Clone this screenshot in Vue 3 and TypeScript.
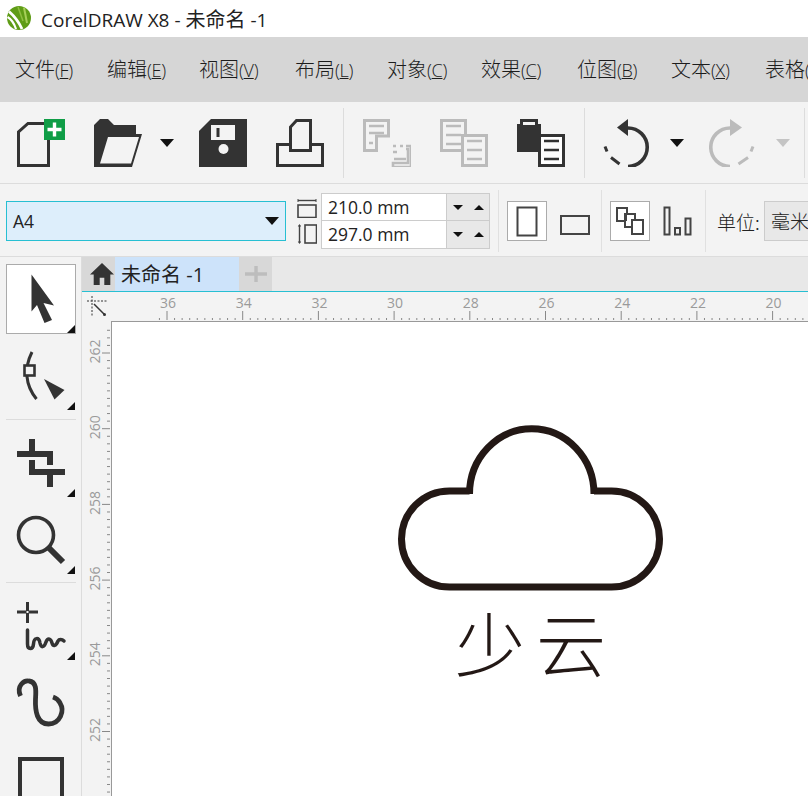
<script setup lang="ts">
const menus = [
  ['文件', 'F'], ['编辑', 'E'], ['视图', 'V'], ['布局', 'L'], ['对象', 'C'],
  ['效果', 'C'], ['位图', 'B'], ['文本', 'X'], ['表格', 'T'],
]
const step = 75.7
const hMajor = [36, 34, 32, 30, 28, 26, 24, 22, 20].map((n, i) => ({ n, x: 167 + i * step }))
const hMinor: number[] = []
for (let i = -1; i < 90; i++) if ((i + 10) % 10 !== 0) hMinor.push(167 + (i * step) / 10)
const vMajor = [262, 260, 258, 256, 254, 252].map((n, i) => ({ n, y: 353 + i * step }))
const vMinor: number[] = []
for (let i = -3; i < 62; i++) if ((i + 10) % 10 !== 0) vMinor.push(353 + (i * step) / 10)
</script>

<template>
  <div class="app">
    <header class="title">
      <svg class="logo" viewBox="6 6 26 24" width="26" height="24">
        <circle cx="19" cy="18" r="12" fill="#5f9c16" />
        <path d="M24 7.500L27 23" stroke="#a7cf5a" stroke-width="2" fill="none" />
        <path d="M18 7L23 21" stroke="#8fbf42" stroke-width="1.500" fill="none" />
        <path d="M9 11.500C13 15 18 20 22 29" stroke="#fff" stroke-width="2.800" fill="none" />
        <path d="M7.500 17C11 19 14 23 16 29" stroke="#fff" stroke-width="2.200" fill="none" />
      </svg>
      <span>CorelDRAW X8 - <span class="cjk">未命名</span> -1</span>
    </header>

    <nav class="menu">
      <span v-for="(m, i) in menus" :key="i" class="menu-item">{{ m[0] }}<small>(<u>{{ m[1] }}</u>)</small></span>
    </nav>

    <section class="toolbar">
      <svg class="ti t-new" viewBox="17 119 48 48" width="48" height="48">
        <path d="M28 123.500H48.500V165.500H18.500V132Z" fill="none" stroke="#333" stroke-width="3" />
        <rect x="44" y="119" width="21" height="21" fill="#0f9d46" />
        <path d="M54.500 122.500V136.500M47.500 129.500H61.500" stroke="#fff" stroke-width="3.400" />
      </svg>
      <svg class="ti t-open" viewBox="94 119 48 48" width="48" height="48">
        <path d="M94 125L100 119H108L114 125H136V134H142L132 167H94Z M108 137L100 163.500H131L139 137Z" fill="#333" fill-rule="evenodd" />
      </svg>
      <i class="caret t-c1"></i>
      <svg class="ti t-save" viewBox="199 119 48 48" width="48" height="48">
        <path d="M211 119H247V167H199V131Z" fill="#333" />
        <rect x="211" y="125" width="24" height="15" fill="#f3f3f3" />
        <rect x="216.500" y="128" width="3" height="9" fill="#333" />
        <circle cx="223.500" cy="149" r="5" fill="#f3f3f3" />
      </svg>
      <svg class="ti t-print" viewBox="276 119 48 48" width="48" height="48">
        <path d="M290.500 150.500V127L296.500 120.500H310.500V150.500Z" fill="none" stroke="#333" stroke-width="3" />
        <path d="M290.500 144.500H277.500V165.500H322.500V144.500H310.500" fill="none" stroke="#333" stroke-width="3" />
      </svg>
      <i class="sep t-s1"></i>
      <svg class="ti t-imp" viewBox="363 119 48 48" width="48" height="48">
        <path d="M364.500 120.500H388.500V136H376.500V150.500H364.500Z" fill="none" stroke="#bbb" stroke-width="3" />
        <path d="M369 126H384M369 133H384M369 143H373" stroke="#bbb" stroke-width="2.600" />
        <path d="M393 146H396M400 146H403M406 146H411V167H393V163H408V149H406M393 152H397M394 159H406" fill="none" stroke="#bbb" stroke-width="2.600" />
      </svg>
      <svg class="ti t-exp" viewBox="440 119 48 48" width="48" height="48">
        <rect x="441.500" y="120.500" width="24" height="30" fill="none" stroke="#bbb" stroke-width="3" />
        <path d="M446 126H461M446 135H461M446 144H461" stroke="#bbb" stroke-width="2.600" />
        <rect x="462.500" y="135.500" width="24" height="30" fill="#f3f3f3" stroke="#bbb" stroke-width="3" />
        <path d="M467 141H482M467 150H482M467 159H482" stroke="#bbb" stroke-width="2.600" />
      </svg>
      <svg class="ti t-paste" viewBox="517 119 48 48" width="48" height="48">
        <path d="M517 124H520V119H538V124H541V152H517Z" fill="#333" />
        <rect x="523" y="122" width="12" height="3" fill="#f3f3f3" />
        <rect x="539.500" y="135.500" width="24" height="30" fill="#fff" stroke="#333" stroke-width="3" />
        <path d="M544 141H559M544 150H559M544 159H559" stroke="#333" stroke-width="2.600" />
      </svg>
      <i class="sep t-s2"></i>
      <svg class="ti t-undo" viewBox="603 119 48 48" width="48" height="48">
        <path d="M617 127.500L628 119V136Z" fill="#333" />
        <path d="M628 128A19.250 19.250 0 0 1 628 166.500" fill="none" stroke="#333" stroke-width="3.600" />
        <path d="M611 157.500L619.500 164M605 146.500L607 151.500" fill="none" stroke="#333" stroke-width="3" />
      </svg>
      <i class="caret t-c2"></i>
      <svg class="ti t-redo" viewBox="709 119 48 48" width="48" height="48">
        <path d="M742 127.500L730 119V136Z" fill="#bbb" />
        <path d="M730 128A19.250 19.250 0 0 0 730 166.500" fill="none" stroke="#bbb" stroke-width="3.600" />
        <path d="M748 157.500L738.500 164M753 146.500L751 151.500" fill="none" stroke="#bbb" stroke-width="3" />
      </svg>
      <i class="caret off t-c3"></i>
      <i class="sep t-s3"></i>
    </section>

    <section class="propbar">
      <div class="select"><span>A4</span><i class="caret"></i></div>
      <div class="dim-icons">
        <svg viewBox="297 199 20 19" width="20" height="19">
          <path d="M298 200.500H316" stroke="#444" stroke-width="1.400" />
          <path d="M298 199V202M316 199V202" stroke="#444" stroke-width="1" />
          <rect x="298" y="205" width="18" height="12.500" fill="none" stroke="#444" stroke-width="1.600" />
        </svg>
        <svg viewBox="297 224 20 20" width="20" height="20">
          <path d="M299.500 225V243" stroke="#444" stroke-width="1.400" />
          <path d="M297.800 226.500L299.500 224L301.200 226.500ZM297.800 241.500L299.500 244L301.200 241.500Z" fill="#444" />
          <rect x="305" y="225" width="11.500" height="18" fill="none" stroke="#444" stroke-width="1.600" />
        </svg>
      </div>
      <div class="dims">
        <div class="dim"><span class="val">210.0 mm</span><span class="spin"><b class="dn"></b><b class="up"></b></span></div>
        <div class="dim"><span class="val">297.0 mm</span><span class="spin"><b class="dn"></b><b class="up"></b></span></div>
      </div>
      <i class="vsep"></i>
      <div class="pbtn active">
        <svg viewBox="0 0 22 31" width="22" height="31"><rect x="1.500" y="1.500" width="19" height="28" fill="none" stroke="#444" stroke-width="2" /></svg>
      </div>
      <div class="pbtn land">
        <svg viewBox="0 0 30 20" width="30" height="20"><rect x="1" y="1" width="28" height="18" fill="none" stroke="#444" stroke-width="2" /></svg>
      </div>
      <i class="vsep s2"></i>
      <div class="pbtn active s3">
        <svg viewBox="618 208 28 28" width="28" height="28">
          <rect x="619" y="209" width="10" height="13" fill="#fff" stroke="#444" stroke-width="2" />
          <rect x="627" y="215" width="10" height="13" fill="#fff" stroke="#444" stroke-width="2" />
          <rect x="634" y="221" width="11" height="14" fill="#fff" stroke="#444" stroke-width="2" />
          <path d="M627 215H629V222H627Z" fill="#444" />
        </svg>
      </div>
      <div class="pbtn s4">
        <svg viewBox="664 206 30 30" width="30" height="30">
          <rect x="665.500" y="207.500" width="5" height="27" fill="none" stroke="#444" stroke-width="2" />
          <rect x="676" y="228" width="5" height="6.500" fill="none" stroke="#444" stroke-width="2" />
          <rect x="686.500" y="218.500" width="5" height="16" fill="none" stroke="#444" stroke-width="2" />
        </svg>
      </div>
      <i class="vsep s5"></i>
      <span class="unit">单位:</span>
      <div class="combo">毫米</div>
    </section>

    <main class="body">
      <aside class="tools">
        <div class="pick">
          <svg viewBox="0 0 70 70" width="70" height="70">
            <path d="M25.500 10.500L48 41.500L37.500 39L46 56L38.500 59L31 41L25.500 47.500Z" fill="#333" />
          </svg>
          <i class="tri"></i>
        </div>
        <div class="tool h-shape">
          <svg viewBox="0 334 81 85" width="81" height="85">
            <path d="M32 352C24 368 25 385 36.500 399" fill="none" stroke="#333" stroke-width="3" />
            <rect x="24.500" y="365.500" width="10" height="10" fill="#f3f3f3" stroke="#333" stroke-width="2.600" />
            <path d="M44 379L64.500 390L54.500 399.500Z" fill="#333" />
          </svg>
          <i class="tri tb1"></i>
        </div>
        <hr />
        <div class="tool h-crop">
          <svg viewBox="0 420 81 78" width="81" height="78">
            <path d="M32 439V457M32 460V472H65M17 454H50V465M50 469V487" fill="none" stroke="#333" stroke-width="6" />
          </svg>
          <i class="tri tb2"></i>
        </div>
        <div class="tool h-zoom">
          <svg viewBox="0 498 81 84" width="81" height="84">
            <circle cx="36" cy="535" r="17.500" fill="none" stroke="#333" stroke-width="3.600" />
            <path d="M49 548L63 562" stroke="#333" stroke-width="6" />
          </svg>
          <i class="tri tb3"></i>
        </div>
        <hr />
        <div class="tool h-free">
          <svg viewBox="0 584 81 80" width="81" height="80">
            <path d="M17 613H26.500M28.500 613H38M27.500 603V612M27.500 614V624" stroke="#333" stroke-width="3" fill="none" />
            <path d="M27.500 631V645C27.500 651 33 651 33.500 645C34 638 39 638 40 644C41 649 44 649 46 643C48 638 51 640 52 644C53 648 56 647 58 642C59 640 62 640 64 642" stroke="#333" stroke-width="3.500" fill="none" stroke-linecap="round" />
          </svg>
          <i class="tri tb4"></i>
        </div>
        <div class="tool h-curve">
          <svg viewBox="0 664 81 80" width="81" height="80">
            <path d="M20.500 697C16 687 24 681 29 682C37 683 36 692 35.500 700C35 712 37 725 48.500 725C60 725 65 712 60 704C58.500 701 56 699 53 698" fill="none" stroke="#333" stroke-width="4.800" />
          </svg>
        </div>
        <div class="rect-tool"></div>
      </aside>

      <div class="work">
        <div class="tabs">
          <div class="home">
            <svg viewBox="0 0 26 26" width="24" height="24">
              <path d="M13 1L26 13.500H22V25H15.500V17H10.500V25H4V13.500H0Z" fill="#333" />
            </svg>
          </div>
          <div class="tab">未命名 -1</div>
          <div class="add">
            <svg viewBox="0 0 22 16" width="22" height="16"><path d="M11 0V16M0 8H22" stroke="#bdbdbd" stroke-width="3.400" /></svg>
          </div>
        </div>
        <div class="ruler-top">
          <svg class="corner" viewBox="82 292 29 30" width="29" height="30">
            <path d="M87 301H107M92 296V317" stroke="#333" stroke-width="1" stroke-dasharray="2 1.500" fill="none" />
            <path d="M94 304L104 314" stroke="#333" stroke-width="1.500" />
            <circle cx="104.500" cy="314.500" r="1.500" fill="#333" />
          </svg>
          <svg class="hruler" viewBox="111 292 697 30" width="697" height="30">
            <line v-for="x in hMinor" :key="x" :x1="x" :x2="x" y1="318" y2="320" stroke="#888" stroke-width="1" />
            <g v-for="m in hMajor" :key="m.n">
              <line :x1="m.x" :x2="m.x" y1="311" y2="320" stroke="#888" stroke-width="1" />
              <text :x="m.x + 1" y="308" text-anchor="middle" class="rt">{{ m.n }}</text>
            </g>
          </svg>
        </div>
        <div class="lower">
          <svg class="vruler" viewBox="82 322 29 474" width="29" height="474">
            <line v-for="y in vMinor" :key="y" :y1="y" :y2="y" x1="107" x2="110" stroke="#888" stroke-width="1" />
            <g v-for="m in vMajor" :key="m.n">
              <line :y1="m.y" :y2="m.y" x1="102" x2="110" stroke="#888" stroke-width="1" />
              <text :transform="`translate(100 ${m.y - 1.5}) rotate(-90)`" text-anchor="middle" class="rt">{{ m.n }}</text>
            </g>
          </svg>
          <div class="canvas">
            <svg class="cloud" viewBox="395 420 272 174" width="272" height="174">
              <path d="M469.500 493A62 65 0 0 1 594 493V490H611.500A48 48 0 0 1 611.500 586H449.500A48 48 0 0 1 449.500 490H469.500Z" fill="none" stroke="#231815" stroke-width="7" />
            </svg>
            <div class="label">少云</div>
          </div>
        </div>
      </div>
    </main>
  </div>
</template>

<style scoped>
.app {
  width: 808px;
  height: 796px;
  overflow: hidden;
  display: flex;
  flex-direction: column;
  background: #f3f3f3;
  color: #222;
  font-family: "Open Sans", "Noto Sans CJK SC", sans-serif;
}
.title {
  height: 37px;
  flex: none;
  background: #fff;
  display: flex;
  align-items: center;
  padding-left: 6px;
  font-size: 19px;
  font-family: "Open Sans", "Noto Sans CJK SC", sans-serif;
  white-space: nowrap;
  box-sizing: border-box;
}
.cjk { font-size: 20px; }
.logo { margin-right: 9px; margin-top: -1px; }
.menu {
  height: 65px;
  flex: none;
  box-sizing: border-box;
  padding-bottom: 2px;
  background: #d6d6d6;
  display: flex;
  align-items: center;
  white-space: nowrap;
  padding-left: 15px;
  font-size: 20px;
  font-family: "Noto Sans CJK SC", sans-serif;
  font-weight: 300;
  color: #1c1c1c;
  overflow: hidden;
}
.menu-item { flex: none; width: 92px; }
.menu-item:nth-child(3), .menu-item:nth-child(6) { width: 96px; }
.menu-item:nth-child(5), .menu-item:nth-child(7), .menu-item:nth-child(8) { width: 94px; }
.menu-item small { font-family: "Open Sans", sans-serif; font-size: 18px; letter-spacing: -0.3px; }
.toolbar {
  height: 82px;
  flex: none;
  box-sizing: border-box;
  border-bottom: 1px solid #dcdcdc;
  display: flex;
  align-items: flex-start;
  padding-top: 17px;
  overflow: hidden;
}
.ti { flex: none; display: block; }
.caret {
  display: block;
  flex: none;
  width: 0;
  height: 0;
  border-left: 7px solid transparent;
  border-right: 7px solid transparent;
  border-top: 8px solid #111;
}
.caret.off { border-top-color: #c4c4c4; }
.sep { flex: none; width: 1px; height: 70px; background: #dcdcdc; margin-top: -11px; }
.t-new { margin-left: 17px; }
.t-open { margin-left: 29px; }
.t-c1 { margin: 20px 0 0 18px; }
.t-save { margin-left: 25px; }
.t-print { margin-left: 29px; }
.t-s1 { margin-left: 19px; }
.t-imp { margin-left: 19px; }
.t-exp { margin-left: 29px; }
.t-paste { margin-left: 29px; }
.t-s2 { margin-left: 19px; }
.t-undo { margin-left: 18px; }
.t-c2 { margin: 20px 0 0 19px; }
.t-redo { margin-left: 25px; }
.t-c3 { margin: 20px 0 0 19px; }
.t-s3 { margin-left: 14px; }

.propbar {
  height: 73px;
  flex: none;
  box-sizing: border-box;
  border-bottom: 1px solid #dcdcdc;
  display: flex;
  align-items: center;
  padding-left: 6px;
  padding-top: 2px;
  font-size: 17.500px;
  white-space: nowrap;
  overflow: hidden;
}
.select {
  flex: none;
  width: 280px;
  height: 40px;
  box-sizing: border-box;
  border: 1px solid #27bfd2;
  background: #ddeefb;
  display: flex;
  align-items: center;
  justify-content: space-between;
  padding: 0 6px 0 6px;
}
.dim-icons { flex: none; width: 20px; margin-left: 11px; display: flex; flex-direction: column; gap: 6px; }
.dim-icons svg { display: block; }
.dims { flex: none; margin-left: 4px; width: 169px; display: flex; flex-direction: column; }
.dim {
  height: 28px;
  box-sizing: border-box;
  border: 1px solid #ccc;
  display: flex;
  background: #fff;
}
.dim + .dim { border-top: 0; }
.val { flex: 1; padding-left: 6px; line-height: 27px; }
.spin { width: 42px; background: #e8e8e8; border-left: 1px solid #ccc; display: flex; align-items: center; justify-content: center; gap: 11px; }
.spin b { width: 0; height: 0; border-left: 5.500px solid transparent; border-right: 5.500px solid transparent; }
.spin .dn { border-top: 5px solid #111; }
.spin .up { border-bottom: 5px solid #111; }
.vsep { flex: none; width: 1px; height: 62px; background: #e0e0e0; margin-left: 8px; }
.pbtn {
  flex: none;
  width: 40px;
  height: 40px;
  box-sizing: border-box;
  display: flex;
  align-items: center;
  justify-content: center;
  margin-left: 8px;
  border: 1px solid transparent;
}
.pbtn + .pbtn { margin-left: 8px; }
.pbtn.active { background: #fff; border-color: #ababab; }
.pbtn svg { display: block; flex: none; }
.pbtn.land { padding-top: 8px; }
.vsep.s2 { margin-left: 6px; }
.pbtn.s3 { margin-left: 8px; }
.pbtn.s4 { margin-left: 8px; }
.vsep.s5 { margin-left: 7px; }
.unit { flex: none; margin-left: 11px; font-family: "Noto Sans CJK SC", sans-serif; font-weight: 300; font-size: 19px; width: 47px; }
.combo {
  flex: none;
  width: 80px;
  height: 40px;
  box-sizing: border-box;
  border: 1px solid #ccc;
  background: #e8e8e8;
  font-family: "Noto Sans CJK SC", sans-serif;
  font-weight: 300;
  font-size: 19px;
  line-height: 38px;
  padding-left: 6px;
}

.body { flex: 1; min-height: 0; display: flex; }
.tools {
  flex: none;
  width: 82px;
  box-sizing: border-box;
  border-right: 1px solid #dcdcdc;
  padding-top: 7px;
  display: flex;
  flex-direction: column;
  overflow: hidden;
}
.pick {
  position: relative;
  flex: none;
  width: 70px;
  height: 70px;
  margin-left: 6px;
  box-sizing: border-box;
  background: #fff;
  border: 1px solid #ababab;
}
.pick svg { display: block; margin: -1px; }
.tri {
  position: absolute;
  right: 0;
  bottom: 0;
  width: 0;
  height: 0;
  border-left: 8px solid transparent;
  border-bottom: 8px solid #111;
}
.tool { position: relative; flex: none; }
.tool svg { display: block; }
.h-shape { height: 85px; }
.h-crop { height: 78px; }
.h-zoom { height: 84px; }
.h-free { height: 80px; }
.h-curve { height: 80px; }
.tb1 { right: 6px; bottom: 9px; }
.tb2 { right: 6px; bottom: 1px; }
.tb3 { right: 6px; bottom: 8px; }
.tb4 { right: 6px; bottom: 3px; }
.tools hr { flex: none; margin: 0 5px 0 6px; border: 0; height: 1px; background: #dcdcdc; }
.rect-tool {
  flex: none;
  margin: 14px 0 0 18px;
  width: 46px;
  height: 60px;
  box-sizing: border-box;
  border: 4px solid #333;
}

.work { flex: 1; min-width: 0; display: flex; flex-direction: column; }
.tabs {
  height: 34px;
  flex: none;
  background: #e8e8e8;
  border-bottom: 1px solid #27bfd2;
  display: flex;
}
.home { width: 33px; background: #d8d8d8; display: flex; align-items: center; justify-content: flex-start; padding-left: 8px; box-sizing: border-box; }
.home svg { flex: none; }
.tab {
  width: 124px;
  background: #cde3fa;
  box-sizing: border-box;
  padding-left: 6px;
  font-size: 20px;
  line-height: 36px;
  font-family: "Open Sans", "Noto Sans CJK SC", sans-serif;
}
.add { width: 33px; background: #d8d8d8; display: flex; align-items: center; justify-content: center; }
.ruler-top { flex: none; height: 30px; display: flex; background: #f3f3f3; }
.corner, .hruler, .vruler { display: block; flex: none; }
.rt { font-family: "Open Sans", sans-serif; font-size: 14px; fill: #9a9a9a; }
.lower { flex: 1; min-height: 0; display: flex; }
.vruler { background: #f3f3f3; }
.canvas {
  position: relative;
  flex: 1;
  background: #fff;
  border-left: 1px solid #999;
  border-top: 1px solid #999;
  box-sizing: border-box;
  margin-top: -1px;
  overflow: hidden;
}
.cloud { position: absolute; left: 283px; top: 99px; display: block; }
.label {
  position: absolute;
  left: 343px;
  top: 270px;
  font-family: "Noto Sans CJK SC", sans-serif;
  font-weight: 300;
  font-size: 70px;
  line-height: 100px;
  letter-spacing: 11px;
  color: #231815;
  white-space: nowrap;
}
</style>
